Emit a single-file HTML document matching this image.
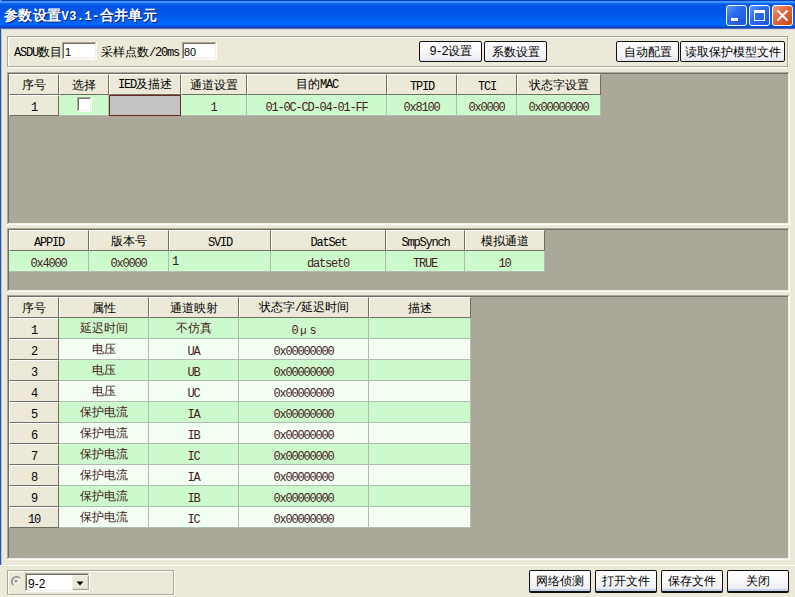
<!DOCTYPE html><html><head><meta charset="utf-8"><style>
*{box-sizing:border-box;margin:0;padding:0}
html,body{width:795px;height:597px;overflow:hidden}
body{position:relative;background:#ECE9D8;font-family:"Liberation Sans",sans-serif;font-size:12px;color:#000;font-weight:500}
.b{position:absolute}
.a{font-family:"Liberation Mono",monospace;font-size:12px;letter-spacing:-1.2px}
.hc{border-top:1px solid #fff;border-left:1px solid #fff;border-right:1px solid #716F64;border-bottom:1px solid #716F64;display:flex;align-items:center;justify-content:center;line-height:12px;white-space:nowrap}
.dc{border-right:1px solid #B0BCB0;border-bottom:1px solid #B0BCB0;display:flex;align-items:center;line-height:12px;white-space:nowrap}
.dc.c{justify-content:center}
.dc.l{justify-content:flex-start;padding-left:3px}
.btn{border:1px solid #111;border-radius:2px;background:linear-gradient(#FFFFFF 0%,#F8F8FA 50%,#EEEEF4 85%,#E2E2EA 100%);display:flex;align-items:center;justify-content:center;white-space:nowrap;line-height:12px}
.tbb{border:1px solid #fff;border-radius:3px}
</style></head><body>
<div class="b " style="left:0px;top:0px;width:8px;height:8px;background:#8AA2E0;"></div>
<div class="b " style="left:0px;top:0px;width:795px;height:29px;background:linear-gradient(#0A3CC0 0px,#0A3CC0 1px,#3A96FF 1px,#3890FF 3px,#1C70F8 3px,#0A5EEC 4px,#0054E3 6px,#0054E3 11px,#0058EA 15px,#0062F6 20px,#0068FF 23px,#0064FA 25px,#0058E8 26px,#0040C0 27px,#2A48A8 28px,#8090C8 29px);border-top-left-radius:3px;"></div>
<div class="b " style="left:0px;top:29px;width:795px;height:1px;background:#D4D6E2;"></div>
<div class="b " style="left:4px;top:7px;width:220px;height:16px;color:#fff;font-weight:bold;font-size:14px;letter-spacing:0.4px;line-height:16px;text-shadow:1px 1px 0 #0A1C70;white-space:nowrap;">参数设置<span style="font-family:'Liberation Mono';font-size:12px;font-weight:bold">V3.1-</span>合并单元</div>
<div class="b tbb" style="left:726px;top:5px;width:21px;height:21px;background:linear-gradient(135deg,#5C9AFF 0%,#2B6BF0 40%,#1E55D8 100%);"><div class="b" style="left:4px;top:12px;width:7px;height:3px;background:#fff"></div></div>
<div class="b tbb" style="left:749px;top:5px;width:21px;height:21px;background:linear-gradient(135deg,#5C9AFF 0%,#2B6BF0 40%,#1E55D8 100%);"><div class="b" style="left:4px;top:4px;width:11px;height:11px;border:1px solid #fff;border-top-width:3px"></div></div>
<div class="b tbb" style="left:772px;top:5px;width:21px;height:21px;background:linear-gradient(135deg,#F0A080 0%,#E46A40 40%,#C9461C 100%);"><svg class="b" style="left:0;top:0" width="19" height="19"><path d="M4.5 4.5 L14.5 14.5 M14.5 4.5 L4.5 14.5" stroke="#fff" stroke-width="2"/></svg></div>
<div class="b " style="left:0px;top:29px;width:1px;height:536px;background:#2850B0;"></div>
<div class="b " style="left:1px;top:30px;width:1px;height:535px;background:#B4C6EC;"></div>
<div class="b " style="left:8px;top:37px;width:781px;height:31px;border:1px solid #fff;"></div>
<div class="b " style="left:7px;top:36px;width:781px;height:31px;border:1px solid #ACA899;"></div>
<div class="b " style="left:14px;top:45px;width:46px;height:14px;white-space:nowrap;line-height:14px"><span class="a">ASDU</span>数目</div>
<div class="b " style="left:62px;top:42px;width:35px;height:18px;background:#fff;"></div>
<div class="b " style="left:62px;top:42px;width:34px;height:17px;background:#ACA899;"></div>
<div class="b " style="left:63px;top:43px;width:33px;height:16px;background:#F1EFE2;"></div>
<div class="b " style="left:63px;top:43px;width:32px;height:15px;background:#716F64;"></div>
<div class="b " style="left:64px;top:44px;width:31px;height:14px;background:#fff;"></div>
<div class="b " style="left:65px;top:45px;width:30px;height:14px;line-height:14px;font-size:11px">1</div>
<div class="b " style="left:101px;top:45px;width:80px;height:14px;white-space:nowrap;line-height:14px">采样点数<span class="a">/20ms</span></div>
<div class="b " style="left:182px;top:42px;width:35px;height:18px;background:#fff;"></div>
<div class="b " style="left:182px;top:42px;width:34px;height:17px;background:#ACA899;"></div>
<div class="b " style="left:183px;top:43px;width:33px;height:16px;background:#F1EFE2;"></div>
<div class="b " style="left:183px;top:43px;width:32px;height:15px;background:#716F64;"></div>
<div class="b " style="left:184px;top:44px;width:31px;height:14px;background:#fff;"></div>
<div class="b " style="left:184px;top:45px;width:30px;height:14px;line-height:14px;font-size:11px">80</div>
<div class="b btn" style="left:419px;top:41px;width:63px;height:21px;"><span><span class="a">9-2</span>设置</span></div>
<div class="b btn" style="left:484px;top:41px;width:63px;height:21px;"><span>系数设置</span></div>
<div class="b btn" style="left:616px;top:41px;width:63px;height:21px;"><span>自动配置</span></div>
<div class="b btn" style="left:680px;top:41px;width:105px;height:21px;"><span>读取保护模型文件</span></div>
<div class="b " style="left:7px;top:72px;width:783px;height:153px;background:#fff;"></div>
<div class="b " style="left:7px;top:72px;width:782px;height:152px;background:#ACA899;"></div>
<div class="b " style="left:8px;top:73px;width:781px;height:151px;background:#F1EFE2;"></div>
<div class="b " style="left:8px;top:73px;width:780px;height:150px;background:#716F64;"></div>
<div class="b " style="left:9px;top:74px;width:779px;height:149px;background:#ABA899;"></div>
<div class="b hc" style="left:9px;top:74px;width:50px;height:21px;background:#ECE9D8;"><span style="color:#000">序号</span></div>
<div class="b hc" style="left:59px;top:74px;width:50px;height:21px;background:#ECE9D8;"><span style="color:#000">选择</span></div>
<div class="b hc" style="left:109px;top:74px;width:72px;height:21px;background:#ECE9D8;"><span style="color:#000"><span class="a">IED</span>及描述</span></div>
<div class="b hc" style="left:181px;top:74px;width:66px;height:21px;background:#ECE9D8;"><span style="color:#000">通道设置</span></div>
<div class="b hc" style="left:247px;top:74px;width:140px;height:21px;background:#ECE9D8;"><span style="color:#000">目的<span class="a">MAC</span></span></div>
<div class="b hc" style="left:387px;top:74px;width:70px;height:21px;background:#ECE9D8;"><span style="color:#000"><span class="a" style="position:relative;top:2px">TPID</span></span></div>
<div class="b hc" style="left:457px;top:74px;width:60px;height:21px;background:#ECE9D8;"><span style="color:#000"><span class="a" style="position:relative;top:2px">TCI</span></span></div>
<div class="b hc" style="left:517px;top:74px;width:84px;height:21px;background:#ECE9D8;"><span style="color:#000">状态字设置</span></div>
<div class="b hc" style="left:9px;top:95px;width:50px;height:21px;background:#ECE9D8;"><span style="color:#000"><span class="a" style="position:relative;top:2px">1</span></span></div>
<div class="b dc c" style="left:59px;top:95px;width:50px;height:21px;background:#CCFACC;"><span style="color:#46201A"></span></div>
<div class="b dc c" style="left:109px;top:95px;width:72px;height:21px;background:#C4C4C4;border:1px solid #6A2A20;"><span style="color:#46201A"></span></div>
<div class="b dc c" style="left:181px;top:95px;width:66px;height:21px;background:#CCFACC;"><span style="color:#46201A"><span class="a" style="position:relative;top:2px">1</span></span></div>
<div class="b dc c" style="left:247px;top:95px;width:140px;height:21px;background:#CCFACC;"><span style="color:#46201A"><span class="a" style="position:relative;top:2px">01-0C-CD-04-01-FF</span></span></div>
<div class="b dc c" style="left:387px;top:95px;width:70px;height:21px;background:#CCFACC;"><span style="color:#46201A"><span class="a" style="position:relative;top:2px">0x8100</span></span></div>
<div class="b dc c" style="left:457px;top:95px;width:60px;height:21px;background:#CCFACC;"><span style="color:#46201A"><span class="a" style="position:relative;top:2px">0x0000</span></span></div>
<div class="b dc c" style="left:517px;top:95px;width:84px;height:21px;background:#CCFACC;"><span style="color:#46201A"><span class="a" style="position:relative;top:2px">0x00000000</span></span></div>
<div class="b " style="left:77px;top:97px;width:15px;height:15px;background:#fff;"></div>
<div class="b " style="left:77px;top:97px;width:14px;height:14px;background:#ACA899;"></div>
<div class="b " style="left:78px;top:98px;width:13px;height:13px;background:#F1EFE2;"></div>
<div class="b " style="left:78px;top:98px;width:12px;height:12px;background:#716F64;"></div>
<div class="b " style="left:79px;top:99px;width:11px;height:11px;background:#fff;"></div>
<div class="b " style="left:7px;top:228px;width:783px;height:64px;background:#fff;"></div>
<div class="b " style="left:7px;top:228px;width:782px;height:63px;background:#ACA899;"></div>
<div class="b " style="left:8px;top:229px;width:781px;height:62px;background:#F1EFE2;"></div>
<div class="b " style="left:8px;top:229px;width:780px;height:61px;background:#716F64;"></div>
<div class="b " style="left:9px;top:230px;width:779px;height:60px;background:#ABA899;"></div>
<div class="b hc" style="left:9px;top:230px;width:80px;height:21px;background:#ECE9D8;"><span style="color:#000"><span class="a" style="position:relative;top:2px">APPID</span></span></div>
<div class="b hc" style="left:89px;top:230px;width:80px;height:21px;background:#ECE9D8;"><span style="color:#000">版本号</span></div>
<div class="b hc" style="left:169px;top:230px;width:102px;height:21px;background:#ECE9D8;"><span style="color:#000"><span class="a" style="position:relative;top:2px">SVID</span></span></div>
<div class="b hc" style="left:271px;top:230px;width:115px;height:21px;background:#ECE9D8;"><span style="color:#000"><span class="a" style="position:relative;top:2px">DatSet</span></span></div>
<div class="b hc" style="left:386px;top:230px;width:79px;height:21px;background:#ECE9D8;"><span style="color:#000"><span class="a" style="position:relative;top:2px">SmpSynch</span></span></div>
<div class="b hc" style="left:465px;top:230px;width:80px;height:21px;background:#ECE9D8;"><span style="color:#000">模拟通道</span></div>
<div class="b dc c" style="left:9px;top:251px;width:80px;height:21px;background:#CCFACC;"><span style="color:#46201A"><span class="a" style="position:relative;top:2px">0x4000</span></span></div>
<div class="b dc c" style="left:89px;top:251px;width:80px;height:21px;background:#CCFACC;"><span style="color:#46201A"><span class="a" style="position:relative;top:2px">0x0000</span></span></div>
<div class="b dc l" style="left:169px;top:251px;width:102px;height:21px;background:#CCFACC;"><span style="color:#222"><span class="a">1</span></span></div>
<div class="b dc c" style="left:271px;top:251px;width:115px;height:21px;background:#CCFACC;"><span style="color:#46201A"><span class="a" style="position:relative;top:2px">datset0</span></span></div>
<div class="b dc c" style="left:386px;top:251px;width:79px;height:21px;background:#CCFACC;"><span style="color:#46201A"><span class="a" style="position:relative;top:2px">TRUE</span></span></div>
<div class="b dc c" style="left:465px;top:251px;width:80px;height:21px;background:#CCFACC;"><span style="color:#46201A"><span class="a" style="position:relative;top:2px">10</span></span></div>
<div class="b " style="left:7px;top:295px;width:783px;height:265px;background:#fff;"></div>
<div class="b " style="left:7px;top:295px;width:782px;height:264px;background:#ACA899;"></div>
<div class="b " style="left:8px;top:296px;width:781px;height:263px;background:#F1EFE2;"></div>
<div class="b " style="left:8px;top:296px;width:780px;height:262px;background:#716F64;"></div>
<div class="b " style="left:9px;top:297px;width:779px;height:261px;background:#ABA899;"></div>
<div class="b hc" style="left:9px;top:297px;width:50px;height:21px;background:#ECE9D8;"><span style="color:#000">序号</span></div>
<div class="b hc" style="left:59px;top:297px;width:90px;height:21px;background:#ECE9D8;"><span style="color:#000">属性</span></div>
<div class="b hc" style="left:149px;top:297px;width:90px;height:21px;background:#ECE9D8;"><span style="color:#000">通道映射</span></div>
<div class="b hc" style="left:239px;top:297px;width:130px;height:21px;background:#ECE9D8;"><span style="color:#000">状态字<span class="a">/</span>延迟时间</span></div>
<div class="b hc" style="left:369px;top:297px;width:102px;height:21px;background:#ECE9D8;"><span style="color:#000">描述</span></div>
<div class="b hc" style="left:9px;top:318px;width:50px;height:21px;background:#ECE9D8;"><span style="color:#000"><span class="a" style="position:relative;top:2px">1</span></span></div>
<div class="b dc c" style="left:59px;top:318px;width:90px;height:21px;background:#CCFACC;"><span style="color:#46201A">延迟时间</span></div>
<div class="b dc c" style="left:149px;top:318px;width:90px;height:21px;background:#CCFACC;"><span style="color:#46201A">不仿真</span></div>
<div class="b dc c" style="left:239px;top:318px;width:130px;height:21px;background:#CCFACC;"><span style="color:#46201A"><span class="a" style="position:relative;top:2px">0</span><span style="display:inline-block;width:12px;text-align:center;font-size:11px;position:relative;top:2px">μ</span><span class="a" style="position:relative;top:2px">s</span></span></div>
<div class="b dc c" style="left:369px;top:318px;width:102px;height:21px;background:#CCFACC;"><span style="color:#46201A"></span></div>
<div class="b hc" style="left:9px;top:339px;width:50px;height:21px;background:#ECE9D8;"><span style="color:#000"><span class="a" style="position:relative;top:2px">2</span></span></div>
<div class="b dc c" style="left:59px;top:339px;width:90px;height:21px;background:#F2FFF2;"><span style="color:#46201A">电压</span></div>
<div class="b dc c" style="left:149px;top:339px;width:90px;height:21px;background:#F2FFF2;"><span style="color:#46201A"><span class="a" style="position:relative;top:2px">UA</span></span></div>
<div class="b dc c" style="left:239px;top:339px;width:130px;height:21px;background:#F2FFF2;"><span style="color:#46201A"><span class="a" style="position:relative;top:2px">0x00000000</span></span></div>
<div class="b dc c" style="left:369px;top:339px;width:102px;height:21px;background:#F2FFF2;"><span style="color:#46201A"></span></div>
<div class="b hc" style="left:9px;top:360px;width:50px;height:21px;background:#ECE9D8;"><span style="color:#000"><span class="a" style="position:relative;top:2px">3</span></span></div>
<div class="b dc c" style="left:59px;top:360px;width:90px;height:21px;background:#CCFACC;"><span style="color:#46201A">电压</span></div>
<div class="b dc c" style="left:149px;top:360px;width:90px;height:21px;background:#CCFACC;"><span style="color:#46201A"><span class="a" style="position:relative;top:2px">UB</span></span></div>
<div class="b dc c" style="left:239px;top:360px;width:130px;height:21px;background:#CCFACC;"><span style="color:#46201A"><span class="a" style="position:relative;top:2px">0x00000000</span></span></div>
<div class="b dc c" style="left:369px;top:360px;width:102px;height:21px;background:#CCFACC;"><span style="color:#46201A"></span></div>
<div class="b hc" style="left:9px;top:381px;width:50px;height:21px;background:#ECE9D8;"><span style="color:#000"><span class="a" style="position:relative;top:2px">4</span></span></div>
<div class="b dc c" style="left:59px;top:381px;width:90px;height:21px;background:#F2FFF2;"><span style="color:#46201A">电压</span></div>
<div class="b dc c" style="left:149px;top:381px;width:90px;height:21px;background:#F2FFF2;"><span style="color:#46201A"><span class="a" style="position:relative;top:2px">UC</span></span></div>
<div class="b dc c" style="left:239px;top:381px;width:130px;height:21px;background:#F2FFF2;"><span style="color:#46201A"><span class="a" style="position:relative;top:2px">0x00000000</span></span></div>
<div class="b dc c" style="left:369px;top:381px;width:102px;height:21px;background:#F2FFF2;"><span style="color:#46201A"></span></div>
<div class="b hc" style="left:9px;top:402px;width:50px;height:21px;background:#ECE9D8;"><span style="color:#000"><span class="a" style="position:relative;top:2px">5</span></span></div>
<div class="b dc c" style="left:59px;top:402px;width:90px;height:21px;background:#CCFACC;"><span style="color:#46201A">保护电流</span></div>
<div class="b dc c" style="left:149px;top:402px;width:90px;height:21px;background:#CCFACC;"><span style="color:#46201A"><span class="a" style="position:relative;top:2px">IA</span></span></div>
<div class="b dc c" style="left:239px;top:402px;width:130px;height:21px;background:#CCFACC;"><span style="color:#46201A"><span class="a" style="position:relative;top:2px">0x00000000</span></span></div>
<div class="b dc c" style="left:369px;top:402px;width:102px;height:21px;background:#CCFACC;"><span style="color:#46201A"></span></div>
<div class="b hc" style="left:9px;top:423px;width:50px;height:21px;background:#ECE9D8;"><span style="color:#000"><span class="a" style="position:relative;top:2px">6</span></span></div>
<div class="b dc c" style="left:59px;top:423px;width:90px;height:21px;background:#F2FFF2;"><span style="color:#46201A">保护电流</span></div>
<div class="b dc c" style="left:149px;top:423px;width:90px;height:21px;background:#F2FFF2;"><span style="color:#46201A"><span class="a" style="position:relative;top:2px">IB</span></span></div>
<div class="b dc c" style="left:239px;top:423px;width:130px;height:21px;background:#F2FFF2;"><span style="color:#46201A"><span class="a" style="position:relative;top:2px">0x00000000</span></span></div>
<div class="b dc c" style="left:369px;top:423px;width:102px;height:21px;background:#F2FFF2;"><span style="color:#46201A"></span></div>
<div class="b hc" style="left:9px;top:444px;width:50px;height:21px;background:#ECE9D8;"><span style="color:#000"><span class="a" style="position:relative;top:2px">7</span></span></div>
<div class="b dc c" style="left:59px;top:444px;width:90px;height:21px;background:#CCFACC;"><span style="color:#46201A">保护电流</span></div>
<div class="b dc c" style="left:149px;top:444px;width:90px;height:21px;background:#CCFACC;"><span style="color:#46201A"><span class="a" style="position:relative;top:2px">IC</span></span></div>
<div class="b dc c" style="left:239px;top:444px;width:130px;height:21px;background:#CCFACC;"><span style="color:#46201A"><span class="a" style="position:relative;top:2px">0x00000000</span></span></div>
<div class="b dc c" style="left:369px;top:444px;width:102px;height:21px;background:#CCFACC;"><span style="color:#46201A"></span></div>
<div class="b hc" style="left:9px;top:465px;width:50px;height:21px;background:#ECE9D8;"><span style="color:#000"><span class="a" style="position:relative;top:2px">8</span></span></div>
<div class="b dc c" style="left:59px;top:465px;width:90px;height:21px;background:#F2FFF2;"><span style="color:#46201A">保护电流</span></div>
<div class="b dc c" style="left:149px;top:465px;width:90px;height:21px;background:#F2FFF2;"><span style="color:#46201A"><span class="a" style="position:relative;top:2px">IA</span></span></div>
<div class="b dc c" style="left:239px;top:465px;width:130px;height:21px;background:#F2FFF2;"><span style="color:#46201A"><span class="a" style="position:relative;top:2px">0x00000000</span></span></div>
<div class="b dc c" style="left:369px;top:465px;width:102px;height:21px;background:#F2FFF2;"><span style="color:#46201A"></span></div>
<div class="b hc" style="left:9px;top:486px;width:50px;height:21px;background:#ECE9D8;"><span style="color:#000"><span class="a" style="position:relative;top:2px">9</span></span></div>
<div class="b dc c" style="left:59px;top:486px;width:90px;height:21px;background:#CCFACC;"><span style="color:#46201A">保护电流</span></div>
<div class="b dc c" style="left:149px;top:486px;width:90px;height:21px;background:#CCFACC;"><span style="color:#46201A"><span class="a" style="position:relative;top:2px">IB</span></span></div>
<div class="b dc c" style="left:239px;top:486px;width:130px;height:21px;background:#CCFACC;"><span style="color:#46201A"><span class="a" style="position:relative;top:2px">0x00000000</span></span></div>
<div class="b dc c" style="left:369px;top:486px;width:102px;height:21px;background:#CCFACC;"><span style="color:#46201A"></span></div>
<div class="b hc" style="left:9px;top:507px;width:50px;height:21px;background:#ECE9D8;"><span style="color:#000"><span class="a" style="position:relative;top:2px">10</span></span></div>
<div class="b dc c" style="left:59px;top:507px;width:90px;height:21px;background:#F2FFF2;"><span style="color:#46201A">保护电流</span></div>
<div class="b dc c" style="left:149px;top:507px;width:90px;height:21px;background:#F2FFF2;"><span style="color:#46201A"><span class="a" style="position:relative;top:2px">IC</span></span></div>
<div class="b dc c" style="left:239px;top:507px;width:130px;height:21px;background:#F2FFF2;"><span style="color:#46201A"><span class="a" style="position:relative;top:2px">0x00000000</span></span></div>
<div class="b dc c" style="left:369px;top:507px;width:102px;height:21px;background:#F2FFF2;"><span style="color:#46201A"></span></div>
<div class="b " style="left:0px;top:565px;width:795px;height:1px;background:#fff;"></div>
<div class="b " style="left:8px;top:571px;width:167px;height:25px;border:1px solid #fff;"></div>
<div class="b " style="left:7px;top:570px;width:167px;height:25px;border:1px solid #ACA899;"></div>
<svg class="b" style="left:10px;top:575px" width="12" height="12"><circle cx="6" cy="6" r="4.2" fill="#F0EFE8"/><path d="M10 3.2 A4.8 4.8 0 1 0 3.2 10" stroke="#8E8C80" stroke-width="1.6" fill="none"/><circle cx="6" cy="6" r="1.6" fill="#A09E92"/></svg>
<div class="b " style="left:25px;top:573px;width:65px;height:19px;background:#fff;"></div>
<div class="b " style="left:25px;top:573px;width:64px;height:18px;background:#ACA899;"></div>
<div class="b " style="left:26px;top:574px;width:63px;height:17px;background:#F1EFE2;"></div>
<div class="b " style="left:26px;top:574px;width:62px;height:16px;background:#716F64;"></div>
<div class="b " style="left:27px;top:575px;width:61px;height:15px;background:#fff;"></div>
<div class="b " style="left:28px;top:577px;width:40px;height:13px;line-height:13px;font-size:13px"><span style="font-family:'Liberation Sans';font-size:12px">9-2</span></div>
<div class="b " style="left:72px;top:575px;width:17px;height:15px;background:#ECE9D8;border-top:1px solid #F4F2E8;border-left:1px solid #F4F2E8;border-right:1px solid #ACA899;border-bottom:1px solid #ACA899;box-shadow:inset -1px -1px 0 #D8D4C6;"><svg class="b" style="left:3px;top:5px" width="9" height="5"><path d="M0.5 0.5 H7.5 L4 4.5 Z" fill="#000"/></svg></div>
<div class="b btn" style="left:529px;top:570px;width:62px;height:23px;border-bottom-width:2px;box-shadow:inset 0 -2px 0 #C4D4EE;"><span>网络侦测</span></div>
<div class="b btn" style="left:595px;top:570px;width:62px;height:23px;border-bottom-width:2px;box-shadow:inset 0 -2px 0 #C4D4EE;"><span>打开文件</span></div>
<div class="b btn" style="left:661px;top:570px;width:62px;height:23px;border-bottom-width:2px;box-shadow:inset 0 -2px 0 #C4D4EE;"><span>保存文件</span></div>
<div class="b btn" style="left:727px;top:570px;width:62px;height:23px;border-bottom-width:2px;box-shadow:inset 0 -2px 0 #C4D4EE;"><span>关闭</span></div>
</body></html>
